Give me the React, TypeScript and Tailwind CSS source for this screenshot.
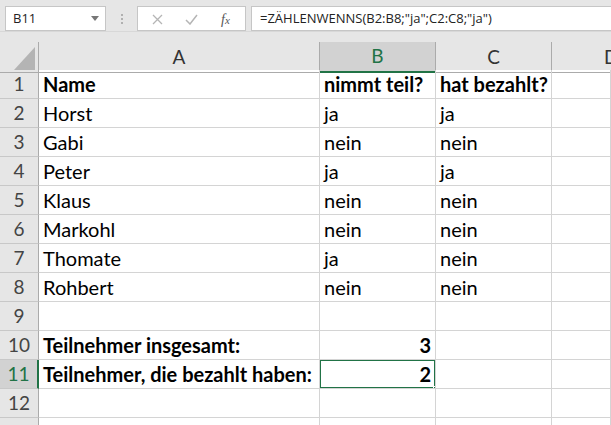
import React from 'react'

type Row = { n: number; a: string; b: string; c: string; bold?: boolean; right?: boolean }

const rows: Row[] = [
  { n: 1, a: 'Name', b: 'nimmt teil?', c: 'hat bezahlt?', bold: true },
  { n: 2, a: 'Horst', b: 'ja', c: 'ja' },
  { n: 3, a: 'Gabi', b: 'nein', c: 'nein' },
  { n: 4, a: 'Peter', b: 'ja', c: 'ja' },
  { n: 5, a: 'Klaus', b: 'nein', c: 'nein' },
  { n: 6, a: 'Markohl', b: 'nein', c: 'nein' },
  { n: 7, a: 'Thomate', b: 'ja', c: 'nein' },
  { n: 8, a: 'Rohbert', b: 'nein', c: 'nein' },
  { n: 9, a: '', b: '', c: '' },
  { n: 10, a: 'Teilnehmer insgesamt:', b: '3', c: '', bold: true, right: true },
  { n: 11, a: 'Teilnehmer, die bezahlt haben:', b: '2', c: '', bold: true, right: true },
  { n: 12, a: '', b: '', c: '' },
  { n: 13, a: '', b: '', c: '' },
]

const cols = 'grid grid-cols-[39px_281px_116px_116px_1fr]'
const cell = 'h-[29px] border-r border-b border-[#d4d4d4] px-[4px] flex items-center overflow-hidden whitespace-nowrap'

export default function App() {
  return (
    <div className="w-[611px] h-[425px] overflow-hidden bg-white font-['Lato',sans-serif] text-[20px] text-black">
      {/* formula bar */}
      <div className="h-[42px] bg-[#e6e6e6] font-['Open_Sans',sans-serif]">
        <div className="flex items-start pt-[6px] pl-[5px] h-[32px] border-b border-[#d8d8d8]">
          <div className="w-[101px] h-[25px] bg-white border border-[#c6c6c6] flex items-center justify-between pl-[7px] pr-[6px] text-[13px] text-[#222]">
            <span>B11</span>
            <svg width="8" height="5" viewBox="0 0 8 5"><path d="M0 0h8L4 5z" fill="#777" /></svg>
          </div>
          <div className="w-[31px] h-[25px] flex flex-col items-center justify-center gap-[2px]">
            <span className="w-[2px] h-[2px] bg-[#b0b0b0]" />
            <span className="w-[2px] h-[2px] bg-[#b0b0b0]" />
            <span className="w-[2px] h-[2px] bg-[#b0b0b0]" />
          </div>
          <div className="w-[109px] h-[25px] bg-white border border-[#c6c6c6] flex items-center relative">
            <svg className="absolute left-[14px] top-[7px]" width="11" height="11" viewBox="0 0 11 11">
              <path d="M1 1l9 9M10 1l-9 9" stroke="#b5b5b5" strokeWidth="1.3" />
            </svg>
            <svg className="absolute left-[47px] top-[7px]" width="13" height="11" viewBox="0 0 13 11">
              <path d="M1 6l4 4 7-9" stroke="#b5b5b5" strokeWidth="1.5" fill="none" />
            </svg>
            <span className="absolute left-[83px] top-[2px] font-['Liberation_Serif',serif] italic text-[14px] text-[#555]">
              f<span className="text-[11px]">x</span>
            </span>
          </div>
          <div className="ml-[5px] flex-1 h-[25px] bg-white border border-[#c6c6c6] border-r-0 flex items-center pl-[8px] text-[13px] text-[#222]">
            =ZÄHLENWENNS(B2:B8;"ja";C2:C8;"ja")
          </div>
        </div>
      </div>

      {/* column headers */}
      <div className={`${cols} h-[28px] bg-[#e6e6e6] text-[19px] text-[#333]`}>
        <div className="relative border-r border-b border-[#ababab]">
          <svg className="absolute right-[3px] bottom-[2px]" width="21" height="23" viewBox="0 0 21 23">
            <path d="M21 0V23H0z" fill="#b4b4b4" />
          </svg>
        </div>
        <div className="border-r border-b border-[#ababab] flex items-center justify-center">A</div>
        <div className="bg-[#d2d2d2] border-r border-[#ababab] border-b-2 border-b-[#217346] flex items-center justify-center text-[#217346]">B</div>
        <div className="border-r border-b border-[#ababab] flex items-center justify-center">C</div>
        <div className="border-b border-[#ababab] flex items-center pl-[52px]">D</div>
      </div>

      {/* rows */}
      {rows.map((r) => {
        const sel = r.n === 11
        return (
          <div key={r.n} className={`${cols} ${r.bold ? 'font-bold' : ''}`}>
            <div
              className={`h-[29px] border-b border-[#c8c8c8] flex items-center justify-center font-normal text-[19px] ${
                sel
                  ? 'bg-[#d2d2d2] text-[#217346] border-r-2 border-r-[#217346]'
                  : 'bg-[#e6e6e6] text-[#444] border-r border-r-[#ababab]'
              }`}
            >
              {r.n < 13 ? r.n : ''}
            </div>
            <div className={cell}>{r.a}</div>
            <div className={`${cell} relative ${r.right ? 'justify-end' : ''}`}>
              {sel && (
                <>
                  <div className="absolute left-[-1px] top-[-1px] right-[-1px] bottom-[-1px] border-2 border-[#217346]" />
                  <div className="absolute right-[-4px] bottom-[-4px] w-[6px] h-[6px] bg-[#217346] border border-white z-10" />
                </>
              )}
              <span className="relative">{r.b}</span>
            </div>
            <div className={cell}>{r.c}</div>
            <div className={cell} />
          </div>
        )
      })}
    </div>
  )
}
